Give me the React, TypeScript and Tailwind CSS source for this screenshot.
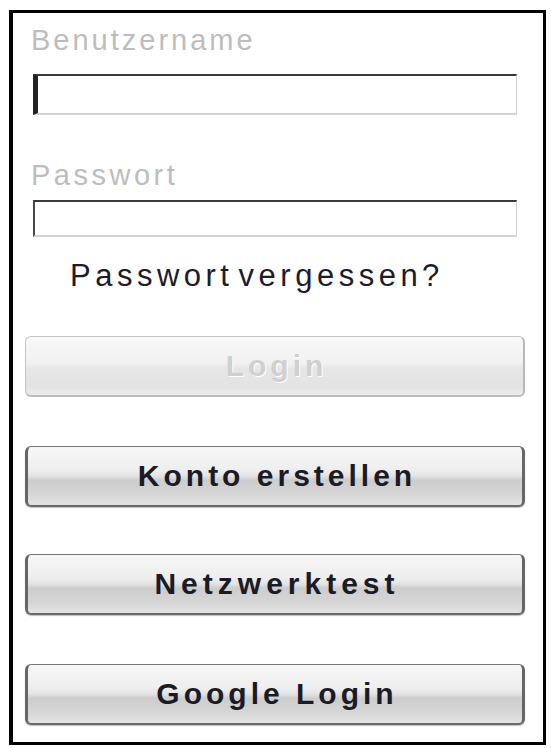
import React from 'react';

const font = { fontFamily: '"Liberation Sans", Arial, sans-serif' };

function GlossButton({ label, disabled = false }: { label: string; disabled?: boolean }) {
  const base =
    'w-[500px] h-[61px] rounded-[6px] flex items-center justify-center pl-[4px] text-[30px] font-bold leading-[30px]';
  const active =
    'border border-[#767676] border-l-[3px] border-r-[3px] border-l-[#666] border-r-[#666] border-b-2 border-b-[#6a6a6a] bg-[linear-gradient(to_bottom,#f7f7f7_0%,#eeeeee_40%,#e3e3e3_50%,#cdcdcd_57%,#d5d5d5_80%,#e3e3e3_100%)] text-[#1b1b26] shadow-[0_1px_1px_rgba(0,0,0,0.25)]';
  const inactive =
    'border border-[#c4c4c4] border-r-2 border-b-2 border-r-[#b8b8b8] border-b-[#bdbdbd] bg-[linear-gradient(to_bottom,#f8f8f8_0%,#f1f1f1_45%,#e6e6e6_55%,#e3e3e3_85%,#ececec_100%)] text-[#d0d0d0] [text-shadow:1px_1px_0_#ffffff]';
  return (
    <button type="button" className={`${base} ${disabled ? inactive : active}`} style={font}>
      {label}
    </button>
  );
}

export default function App() {
  const buttons = [
    { label: 'Konto erstellen', gap: 'mt-[49px]', tracking: 'tracking-[4px]' },
    { label: 'Netzwerktest', gap: 'mt-[47px]', tracking: 'tracking-[5px]' },
    { label: 'Google Login', gap: 'mt-[49px]', tracking: 'tracking-[4px]' },
  ];

  return (
    <div className="min-h-screen bg-white pt-[10px] pl-[9px]">
      {/* Login panel */}
      <div
        className="w-[537px] h-[735px] border-[3px] border-l-4 border-black bg-white flex flex-col pl-[12px] pt-[13px]"
        style={font}
      >
        <label className="ml-[6px] h-[28px] text-[29px] leading-[28px] tracking-[3px] text-[#bdbdbd]">
          Benutzername
        </label>
        <input
          readOnly
          className="mt-[20px] ml-[8px] w-[484px] h-[41px] bg-white border-t-2 border-l-[5px] border-r border-b-2 border-t-[#3a3a3a] border-l-[#222] border-r-[#cfcfcf] border-b-[#d4d4d4] outline-none"
        />

        <label className="mt-[46px] ml-[6px] h-[28px] text-[29px] leading-[28px] tracking-[3.5px] text-[#bdbdbd]">
          Passwort
        </label>
        <input
          readOnly
          type="password"
          className="mt-[11px] ml-[8px] w-[484px] h-[37px] bg-white border-t-2 border-l-2 border-r border-b-2 border-t-[#3a3a3a] border-l-[#4a4a4a] border-r-[#cfcfcf] border-b-[#d4d4d4] outline-none"
        />

        <a className="mt-[24px] ml-[45px] h-[30px] text-[31px] leading-[30px] tracking-[4.5px] [word-spacing:-8px] text-[#1c1c2a]">
          Passwort vergessen?
        </a>

        <div className="mt-[45px] tracking-[4px]">
          <GlossButton label="Login" disabled />
        </div>
        {buttons.map((b) => (
          <div key={b.label} className={`${b.gap} ${b.tracking}`}>
            <GlossButton label={b.label} />
          </div>
        ))}
      </div>
    </div>
  );
}
